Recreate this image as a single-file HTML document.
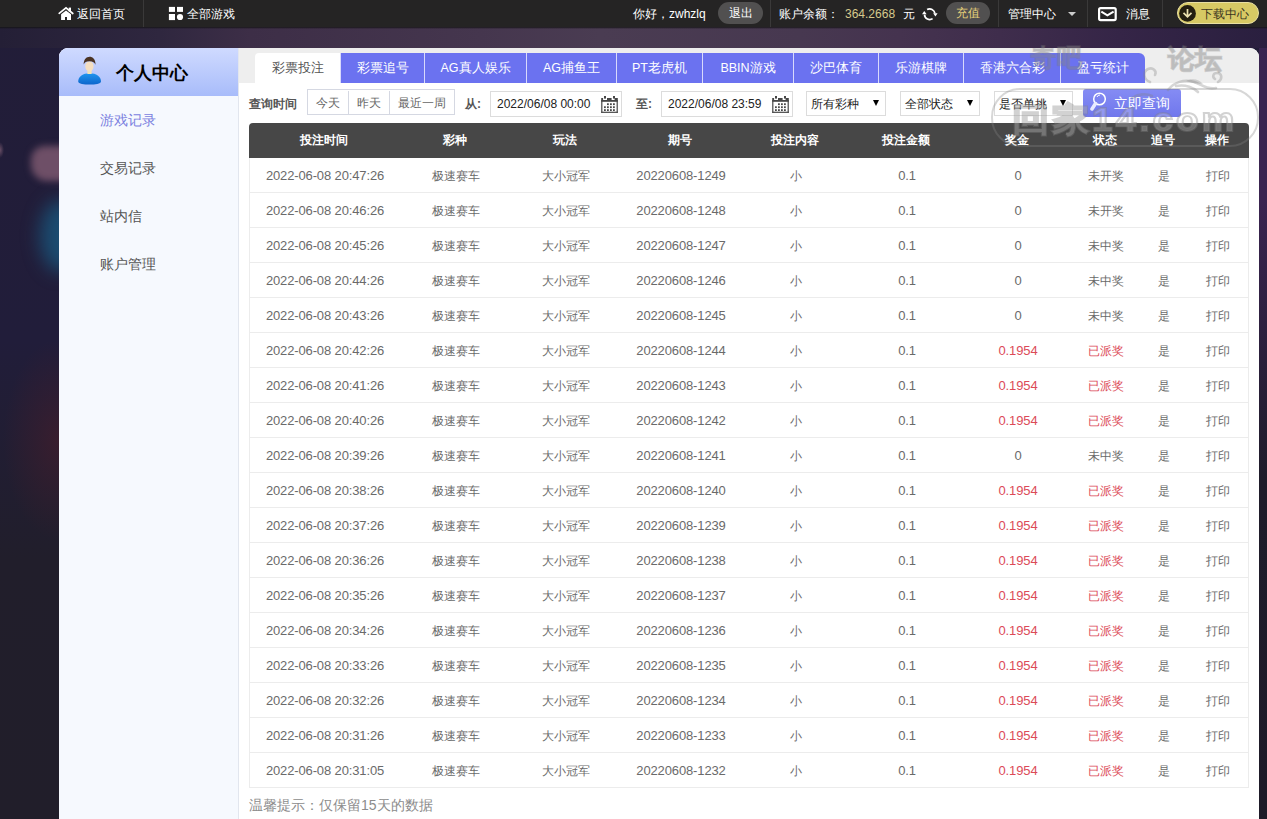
<!DOCTYPE html>
<html><head><meta charset="utf-8">
<style>
*{margin:0;padding:0;box-sizing:border-box}
html,body{width:1267px;height:819px;overflow:hidden}
body{position:relative;font-family:"Liberation Sans",sans-serif;font-size:13px;color:#555;
background:
 linear-gradient(rgba(18,18,18,0.85) 27px, rgba(18,18,18,0) 29px) 0 0 / 1267px 40px no-repeat,
 linear-gradient(90deg,#241f36 0px,#2f273f 160px,#3d2e47 250px,#45364e 480px,#4a3c52 600px,#473850 800px,#45334f 900px,#3f2d4c 1000px,#352547 1120px,#2a1f3f 1267px) 0 27px / 1267px 21px no-repeat,
 radial-gradient(ellipse 4px 8px at 0px 150px, rgba(150,110,130,0.6), rgba(150,110,130,0) 100%),
 radial-gradient(ellipse 55px 100px at 58px 440px, rgba(75,30,42,0.55), rgba(75,30,42,0) 100%),
 linear-gradient(180deg,#382450 0px,#3a2450 200px,#2a1f3a 360px,#1f1c2a 480px,#1e1b28 819px) 1259px 0 / 8px 819px no-repeat,
 linear-gradient(180deg,#221d38 0px,#211d3a 340px,#211e2b 560px,#211e2a 819px);
}
.abs{position:absolute}
#top{position:absolute;left:0;top:0;width:1267px;height:27px;background:#252424;color:#fff;font-size:12px}
#top .t{position:absolute;top:1px;line-height:27px;white-space:nowrap}
#top .dv{position:absolute;top:0;width:1px;height:27px;background:#3a3939}
.pill{position:absolute;top:2px;height:22px;border-radius:11px;background:#515050;line-height:23px;text-align:center}
#panel{position:absolute;left:59px;top:48px;width:1200px;height:771px;background:#fff;border-radius:9px 9px 0 0;overflow:hidden}
#side{position:absolute;left:0;top:0;width:180px;height:771px;background:#f6f9fe;border-right:1px solid #e2e6ee}
#sidehd{position:absolute;left:0;top:0;width:179px;height:48px;background:linear-gradient(#cfdaff,#a8bcfa)}
#sidehd .tt{position:absolute;left:57px;top:1px;line-height:48px;font-size:18px;font-weight:bold;color:#000}
.menu{position:absolute;left:41px;font-size:14px;color:#555;line-height:20px}
#tabbar{position:absolute;left:180px;top:0;width:1020px;height:35px;background:#eeeeee}
.tab{position:absolute;top:5px;height:30px;background:#6b72f0;color:#fff;text-align:center;line-height:31px;font-size:12.5px;border-left:1px solid #d8dafc}
.tab.act{background:#fff;color:#555;border-left:none;border-radius:4px 0 0 0}
.tab.last{border-radius:0 6px 0 0}
.lbl{position:absolute;font-size:12px;color:#555;font-weight:bold;line-height:20px}
.btng{position:absolute;left:248px;top:41px;width:148px;height:26px;border:1px solid #d5d8e2}
.btng span{position:absolute;top:1px;height:24px;line-height:24px;text-align:center;color:#666;font-size:12px}
.inp{position:absolute;top:43px;width:132px;height:26px;border:1px solid #dcdcdc;background:#fff;color:#222;font-size:12px;line-height:24px;padding-left:6px}
.inp .cal{position:absolute;right:3px;top:3px}
.sel{position:absolute;top:43px;width:80px;height:25px;border:1px solid #dcdcdc;background:#fff;color:#222;font-size:12px;line-height:25px;padding-left:4px}
.sel .ar{position:absolute;right:6px;top:8px;width:0;height:0;border-left:3.5px solid transparent;border-right:3.5px solid transparent;border-top:6px solid #000}
#search{position:absolute;left:1024px;top:41px;width:98px;height:28px;border-radius:3px;background:linear-gradient(#858cf4,#7077ec);color:#fff;font-size:14px;line-height:28px}
#tbl{position:absolute;left:190px;top:75px;width:1000px;height:665px}
#thd{position:absolute;left:0;top:0;width:1000px;height:35px;background:#474747;border-radius:4px 4px 0 0;color:#fff;font-weight:bold;font-size:12px}
.c{position:absolute;width:120px;text-align:center;top:0;line-height:35px;white-space:nowrap}
.row{position:absolute;left:0;width:1000px;height:35px;border:1px solid #ececec;border-top:none;color:#6a6a6a;font-size:13px}
.row .c{line-height:34px;top:1px;letter-spacing:-0.13px}
.row .c.z{font-size:12px;letter-spacing:0}
.red{color:#dc4a58;font-style:normal}
#tip{position:absolute;left:190px;top:747px;font-size:14px;color:#8c8c8c;line-height:20px}
.wm{position:absolute;font-weight:bold;color:rgba(150,150,150,0.26);-webkit-text-stroke:1.5px rgba(120,120,120,0.28);white-space:nowrap;line-height:1}
</style></head><body>
<div class="abs" style="left:31px;top:146px;width:40px;height:35px;border-radius:14px 8px 8px 16px;background:rgba(140,98,120,0.72);filter:blur(3.5px)"></div>
<div class="abs" style="left:40px;top:200px;width:42px;height:72px;border-radius:50%;background:rgba(24,96,135,0.7);filter:blur(9px)"></div>
<div id="top">
  <svg class="abs" style="left:55px;top:3px" width="20" height="20" viewBox="0 0 20 20"><path d="M4.2 10.3L11 4.9l6.8 5.6" fill="none" stroke="#fff" stroke-width="1.7" stroke-linecap="round" stroke-linejoin="miter"/><rect x="13.7" y="4.6" width="2.3" height="4" fill="#fff"/><path d="M6.1 17.1V11.2L11 7.6l5 3.6v5.9h-4V14h-2v3.1z" fill="#fff"/></svg>
  <span class="t" style="left:77px">返回首页</span>
  <div class="dv" style="left:143px"></div>
  <svg class="abs" style="left:165px;top:3px" width="20" height="20" viewBox="0 0 20 20"><rect x="3.9" y="3.9" width="6.1" height="5" fill="#fff"/><rect x="12" y="3.9" width="6" height="5" fill="#fff"/><rect x="3.9" y="11" width="6.1" height="6.1" fill="#fff"/><circle cx="15" cy="14" r="3.1" fill="#fff"/></svg>
  <span class="t" style="left:187px">全部游戏</span>
  <span class="t" style="left:633px">你好，zwhzlq</span>
  <div class="pill" style="left:718px;width:45px">退出</div>
  <div class="dv" style="left:770px"></div>
  <span class="t" style="left:779px">账户余额：</span>
  <span class="t" style="left:845px;color:#d6c98c">364.2668</span>
  <span class="t" style="left:903px">元</span>
  <svg class="abs" style="left:918px;top:3px" width="24" height="24" viewBox="0 0 24 24"><g fill="none" stroke="#fff" stroke-width="1.7"><path d="M9.1 6.6A5.2 5.2 0 0 1 16.9 10.4"/><path d="M14.6 15.6A5.2 5.2 0 0 1 6.5 11.6"/></g><g fill="#fff"><path d="M15.2 10.2h4.4l-2.2 3.2z"/><path d="M4 11.3h4.6L6.3 8z"/></g></svg>
  <div class="pill" style="left:946px;width:44px;color:#e6d27a">充值</div>
  <div class="dv" style="left:998px"></div>
  <span class="t" style="left:1008px">管理中心</span>
  <div class="abs" style="left:1068px;top:12px;width:0;height:0;border-left:4px solid transparent;border-right:4px solid transparent;border-top:4px solid #ccc"></div>
  <div class="dv" style="left:1087px"></div>
  <svg class="abs" style="left:1098px;top:7px" width="19" height="15" viewBox="0 0 19 15"><rect x="1.1" y="1.1" width="16.6" height="12" rx="1.5" fill="none" stroke="#fff" stroke-width="2.2"/><path d="M3.3 4.6l6.1 3.8 6.2-3.8" fill="none" stroke="#fff" stroke-width="2"/></svg>
  <span class="t" style="left:1126px">消息</span>
  <div class="dv" style="left:1162px"></div>
  <div class="abs" style="left:1177px;top:2px;width:82px;height:22px;border-radius:11px;background:#d7c964;border:1.5px solid #e9e0a2"></div>
  <svg class="abs" style="left:1174px;top:1px" width="26" height="26" viewBox="0 0 26 26"><circle cx="13.5" cy="12.4" r="8.4" fill="#241f10"/><path d="M13.5 8v7.6M9.5 11.9l4 3.9 4-3.9" fill="none" stroke="#ece2b0" stroke-width="1.7"/></svg>
  <span class="t" style="left:1201px;color:#3b3520">下载中心</span>
</div>

<div id="panel">
  <div id="side">
    <div id="sidehd">
      <svg class="abs" style="left:18px;top:8px" width="26" height="30" viewBox="0 0 26 30"><defs><linearGradient id="bd" x1="0" y1="0" x2="0" y2="1"><stop offset="0" stop-color="#1f95ee"/><stop offset="1" stop-color="#0d66cc"/></linearGradient></defs><path d="M1.2 25.5C1.2 20.5 6 17.3 12.6 17.3S24 20.5 24 25.5C24 28 18 28.6 12.6 28.6S1.2 28 1.2 25.5z" fill="url(#bd)"/><rect x="10.4" y="12" width="4.2" height="6" fill="#f3e2b4"/><ellipse cx="12.4" cy="10.4" rx="4.1" ry="5" fill="#f5dfc0"/><path d="M6.7 8.5C6.5 3.5 9.5 0.8 12.6 0.8S18.7 3.2 18.5 8.8C17.5 6.5 16 5.2 12.5 5.2S7.8 6.2 6.7 8.5z" fill="#4b3424"/></svg>
      <span class="tt">个人中心</span>
    </div>
    <div class="menu" style="top:62px;color:#7a7fe0">游戏记录</div>
    <div class="menu" style="top:110px">交易记录</div>
    <div class="menu" style="top:158px">站内信</div>
    <div class="menu" style="top:206px">账户管理</div>
  </div>
  <div id="tabbar"></div>
  <div class="tab act" style="left:196px;width:85px">彩票投注</div><div class="tab" style="left:281px;width:84px">彩票追号</div><div class="tab" style="left:365px;width:102px">AG真人娱乐</div><div class="tab" style="left:467px;width:90px">AG捕鱼王</div><div class="tab" style="left:557px;width:86px">PT老虎机</div><div class="tab" style="left:643px;width:91px">BBIN游戏</div><div class="tab" style="left:734px;width:85px">沙巴体育</div><div class="tab" style="left:819px;width:85px">乐游棋牌</div><div class="tab" style="left:904px;width:97px">香港六合彩</div><div class="tab last" style="left:1001px;width:85px">盈亏统计</div>
  <span class="lbl" style="left:190px;top:46px">查询时间</span>
  <div class="btng"><span style="left:0;width:41px;border-right:1px solid #d5d8e2">今天</span><span style="left:41px;width:41px;border-right:1px solid #d5d8e2">昨天</span><span style="left:82px;width:64px">最近一周</span></div>
  <span class="lbl" style="left:406px;top:46px">从:</span>
  <div class="inp" style="left:431px">2022/06/08 00:00<svg class="cal" width="17" height="18" viewBox="0 0 17 18"><g fill="#474747"><rect x="0.2" y="5" width="16.6" height="1.8"/><rect x="0.2" y="3" width="1.9" height="2.2"/><rect x="6" y="3" width="4.6" height="2.2"/><rect x="13.6" y="3" width="3.2" height="2.2"/><rect x="3" y="1" width="2" height="2.6"/><rect x="12" y="1" width="2" height="2.6"/><rect x="0.2" y="5" width="1.2" height="12.9"/><rect x="15.6" y="5" width="1.2" height="12.9"/><rect x="0.2" y="16.7" width="16.6" height="1.2"/><rect x="6" y="8.3" width="1.8" height="1.8"/><rect x="9" y="8.3" width="1.8" height="1.8"/><rect x="12" y="8.3" width="1.8" height="1.8"/><rect x="3" y="11.3" width="1.8" height="1.8"/><rect x="6" y="11.3" width="1.8" height="1.8"/><rect x="9" y="11.3" width="1.8" height="1.8"/><rect x="12" y="11.3" width="1.8" height="1.8"/><rect x="3" y="14.2" width="1.8" height="1.8"/><rect x="6" y="14.2" width="1.8" height="1.8"/><rect x="9" y="14.2" width="1.8" height="1.8"/><rect x="12" y="14.2" width="1.8" height="1.8"/></g></svg></div>
  <span class="lbl" style="left:577px;top:46px">至:</span>
  <div class="inp" style="left:602px">2022/06/08 23:59<svg class="cal" width="17" height="18" viewBox="0 0 17 18"><g fill="#474747"><rect x="0.2" y="5" width="16.6" height="1.8"/><rect x="0.2" y="3" width="1.9" height="2.2"/><rect x="6" y="3" width="4.6" height="2.2"/><rect x="13.6" y="3" width="3.2" height="2.2"/><rect x="3" y="1" width="2" height="2.6"/><rect x="12" y="1" width="2" height="2.6"/><rect x="0.2" y="5" width="1.2" height="12.9"/><rect x="15.6" y="5" width="1.2" height="12.9"/><rect x="0.2" y="16.7" width="16.6" height="1.2"/><rect x="6" y="8.3" width="1.8" height="1.8"/><rect x="9" y="8.3" width="1.8" height="1.8"/><rect x="12" y="8.3" width="1.8" height="1.8"/><rect x="3" y="11.3" width="1.8" height="1.8"/><rect x="6" y="11.3" width="1.8" height="1.8"/><rect x="9" y="11.3" width="1.8" height="1.8"/><rect x="12" y="11.3" width="1.8" height="1.8"/><rect x="3" y="14.2" width="1.8" height="1.8"/><rect x="6" y="14.2" width="1.8" height="1.8"/><rect x="9" y="14.2" width="1.8" height="1.8"/><rect x="12" y="14.2" width="1.8" height="1.8"/></g></svg></div>
  <div class="sel" style="left:747px">所有彩种<i class="ar"></i></div>
  <div class="sel" style="left:841px">全部状态<i class="ar"></i></div>
  <div class="sel" style="left:935px;width:79px">是否单挑<i class="ar"></i></div>
  <div id="search">
    <svg class="abs" style="left:7px;top:3px" width="16" height="20" viewBox="0 0 16 20"><circle cx="9.5" cy="7" r="5.8" fill="none" stroke="#fff" stroke-width="1.5"/><path d="M7 5a3 3 0 0 1 3-2" fill="none" stroke="#fff" stroke-width="1"/><path d="M5.5 11.5L2 17" stroke="#e8eaff" stroke-width="3.5" stroke-linecap="round"/></svg>
    <span class="abs" style="left:31px;top:0">立即查询</span>
  </div>
  <div id="tbl">
    <div id="thd"><span class="c" style="left:15.0px">投注时间</span><span class="c" style="left:145.5px">彩种</span><span class="c" style="left:255.7px">玩法</span><span class="c" style="left:371.0px">期号</span><span class="c" style="left:486.3px">投注内容</span><span class="c" style="left:597.0px">投注金额</span><span class="c" style="left:708.0px">奖金</span><span class="c" style="left:796.3px">状态</span><span class="c" style="left:853.8px">追号</span><span class="c" style="left:908.0px">操作</span></div>
    <div class="row" style="top:35px"><span class="c" style="left:15.0px">2022-06-08 20:47:26</span><span class="c z" style="left:145.5px">极速赛车</span><span class="c z" style="left:255.7px">大小冠军</span><span class="c" style="left:371.0px">20220608-1249</span><span class="c z" style="left:486.3px">小</span><span class="c" style="left:597.0px">0.1</span><span class="c" style="left:708.0px">0</span><span class="c z" style="left:796.3px">未开奖</span><span class="c z" style="left:853.8px">是</span><span class="c z" style="left:908.0px">打印</span></div><div class="row" style="top:70px"><span class="c" style="left:15.0px">2022-06-08 20:46:26</span><span class="c z" style="left:145.5px">极速赛车</span><span class="c z" style="left:255.7px">大小冠军</span><span class="c" style="left:371.0px">20220608-1248</span><span class="c z" style="left:486.3px">小</span><span class="c" style="left:597.0px">0.1</span><span class="c" style="left:708.0px">0</span><span class="c z" style="left:796.3px">未开奖</span><span class="c z" style="left:853.8px">是</span><span class="c z" style="left:908.0px">打印</span></div><div class="row" style="top:105px"><span class="c" style="left:15.0px">2022-06-08 20:45:26</span><span class="c z" style="left:145.5px">极速赛车</span><span class="c z" style="left:255.7px">大小冠军</span><span class="c" style="left:371.0px">20220608-1247</span><span class="c z" style="left:486.3px">小</span><span class="c" style="left:597.0px">0.1</span><span class="c" style="left:708.0px">0</span><span class="c z" style="left:796.3px">未中奖</span><span class="c z" style="left:853.8px">是</span><span class="c z" style="left:908.0px">打印</span></div><div class="row" style="top:140px"><span class="c" style="left:15.0px">2022-06-08 20:44:26</span><span class="c z" style="left:145.5px">极速赛车</span><span class="c z" style="left:255.7px">大小冠军</span><span class="c" style="left:371.0px">20220608-1246</span><span class="c z" style="left:486.3px">小</span><span class="c" style="left:597.0px">0.1</span><span class="c" style="left:708.0px">0</span><span class="c z" style="left:796.3px">未中奖</span><span class="c z" style="left:853.8px">是</span><span class="c z" style="left:908.0px">打印</span></div><div class="row" style="top:175px"><span class="c" style="left:15.0px">2022-06-08 20:43:26</span><span class="c z" style="left:145.5px">极速赛车</span><span class="c z" style="left:255.7px">大小冠军</span><span class="c" style="left:371.0px">20220608-1245</span><span class="c z" style="left:486.3px">小</span><span class="c" style="left:597.0px">0.1</span><span class="c" style="left:708.0px">0</span><span class="c z" style="left:796.3px">未中奖</span><span class="c z" style="left:853.8px">是</span><span class="c z" style="left:908.0px">打印</span></div><div class="row" style="top:210px"><span class="c" style="left:15.0px">2022-06-08 20:42:26</span><span class="c z" style="left:145.5px">极速赛车</span><span class="c z" style="left:255.7px">大小冠军</span><span class="c" style="left:371.0px">20220608-1244</span><span class="c z" style="left:486.3px">小</span><span class="c" style="left:597.0px">0.1</span><span class="c" style="left:708.0px"><i class="red">0.1954</i></span><span class="c z" style="left:796.3px"><i class="red">已派奖</i></span><span class="c z" style="left:853.8px">是</span><span class="c z" style="left:908.0px">打印</span></div><div class="row" style="top:245px"><span class="c" style="left:15.0px">2022-06-08 20:41:26</span><span class="c z" style="left:145.5px">极速赛车</span><span class="c z" style="left:255.7px">大小冠军</span><span class="c" style="left:371.0px">20220608-1243</span><span class="c z" style="left:486.3px">小</span><span class="c" style="left:597.0px">0.1</span><span class="c" style="left:708.0px"><i class="red">0.1954</i></span><span class="c z" style="left:796.3px"><i class="red">已派奖</i></span><span class="c z" style="left:853.8px">是</span><span class="c z" style="left:908.0px">打印</span></div><div class="row" style="top:280px"><span class="c" style="left:15.0px">2022-06-08 20:40:26</span><span class="c z" style="left:145.5px">极速赛车</span><span class="c z" style="left:255.7px">大小冠军</span><span class="c" style="left:371.0px">20220608-1242</span><span class="c z" style="left:486.3px">小</span><span class="c" style="left:597.0px">0.1</span><span class="c" style="left:708.0px"><i class="red">0.1954</i></span><span class="c z" style="left:796.3px"><i class="red">已派奖</i></span><span class="c z" style="left:853.8px">是</span><span class="c z" style="left:908.0px">打印</span></div><div class="row" style="top:315px"><span class="c" style="left:15.0px">2022-06-08 20:39:26</span><span class="c z" style="left:145.5px">极速赛车</span><span class="c z" style="left:255.7px">大小冠军</span><span class="c" style="left:371.0px">20220608-1241</span><span class="c z" style="left:486.3px">小</span><span class="c" style="left:597.0px">0.1</span><span class="c" style="left:708.0px">0</span><span class="c z" style="left:796.3px">未中奖</span><span class="c z" style="left:853.8px">是</span><span class="c z" style="left:908.0px">打印</span></div><div class="row" style="top:350px"><span class="c" style="left:15.0px">2022-06-08 20:38:26</span><span class="c z" style="left:145.5px">极速赛车</span><span class="c z" style="left:255.7px">大小冠军</span><span class="c" style="left:371.0px">20220608-1240</span><span class="c z" style="left:486.3px">小</span><span class="c" style="left:597.0px">0.1</span><span class="c" style="left:708.0px"><i class="red">0.1954</i></span><span class="c z" style="left:796.3px"><i class="red">已派奖</i></span><span class="c z" style="left:853.8px">是</span><span class="c z" style="left:908.0px">打印</span></div><div class="row" style="top:385px"><span class="c" style="left:15.0px">2022-06-08 20:37:26</span><span class="c z" style="left:145.5px">极速赛车</span><span class="c z" style="left:255.7px">大小冠军</span><span class="c" style="left:371.0px">20220608-1239</span><span class="c z" style="left:486.3px">小</span><span class="c" style="left:597.0px">0.1</span><span class="c" style="left:708.0px"><i class="red">0.1954</i></span><span class="c z" style="left:796.3px"><i class="red">已派奖</i></span><span class="c z" style="left:853.8px">是</span><span class="c z" style="left:908.0px">打印</span></div><div class="row" style="top:420px"><span class="c" style="left:15.0px">2022-06-08 20:36:26</span><span class="c z" style="left:145.5px">极速赛车</span><span class="c z" style="left:255.7px">大小冠军</span><span class="c" style="left:371.0px">20220608-1238</span><span class="c z" style="left:486.3px">小</span><span class="c" style="left:597.0px">0.1</span><span class="c" style="left:708.0px"><i class="red">0.1954</i></span><span class="c z" style="left:796.3px"><i class="red">已派奖</i></span><span class="c z" style="left:853.8px">是</span><span class="c z" style="left:908.0px">打印</span></div><div class="row" style="top:455px"><span class="c" style="left:15.0px">2022-06-08 20:35:26</span><span class="c z" style="left:145.5px">极速赛车</span><span class="c z" style="left:255.7px">大小冠军</span><span class="c" style="left:371.0px">20220608-1237</span><span class="c z" style="left:486.3px">小</span><span class="c" style="left:597.0px">0.1</span><span class="c" style="left:708.0px"><i class="red">0.1954</i></span><span class="c z" style="left:796.3px"><i class="red">已派奖</i></span><span class="c z" style="left:853.8px">是</span><span class="c z" style="left:908.0px">打印</span></div><div class="row" style="top:490px"><span class="c" style="left:15.0px">2022-06-08 20:34:26</span><span class="c z" style="left:145.5px">极速赛车</span><span class="c z" style="left:255.7px">大小冠军</span><span class="c" style="left:371.0px">20220608-1236</span><span class="c z" style="left:486.3px">小</span><span class="c" style="left:597.0px">0.1</span><span class="c" style="left:708.0px"><i class="red">0.1954</i></span><span class="c z" style="left:796.3px"><i class="red">已派奖</i></span><span class="c z" style="left:853.8px">是</span><span class="c z" style="left:908.0px">打印</span></div><div class="row" style="top:525px"><span class="c" style="left:15.0px">2022-06-08 20:33:26</span><span class="c z" style="left:145.5px">极速赛车</span><span class="c z" style="left:255.7px">大小冠军</span><span class="c" style="left:371.0px">20220608-1235</span><span class="c z" style="left:486.3px">小</span><span class="c" style="left:597.0px">0.1</span><span class="c" style="left:708.0px"><i class="red">0.1954</i></span><span class="c z" style="left:796.3px"><i class="red">已派奖</i></span><span class="c z" style="left:853.8px">是</span><span class="c z" style="left:908.0px">打印</span></div><div class="row" style="top:560px"><span class="c" style="left:15.0px">2022-06-08 20:32:26</span><span class="c z" style="left:145.5px">极速赛车</span><span class="c z" style="left:255.7px">大小冠军</span><span class="c" style="left:371.0px">20220608-1234</span><span class="c z" style="left:486.3px">小</span><span class="c" style="left:597.0px">0.1</span><span class="c" style="left:708.0px"><i class="red">0.1954</i></span><span class="c z" style="left:796.3px"><i class="red">已派奖</i></span><span class="c z" style="left:853.8px">是</span><span class="c z" style="left:908.0px">打印</span></div><div class="row" style="top:595px"><span class="c" style="left:15.0px">2022-06-08 20:31:26</span><span class="c z" style="left:145.5px">极速赛车</span><span class="c z" style="left:255.7px">大小冠军</span><span class="c" style="left:371.0px">20220608-1233</span><span class="c z" style="left:486.3px">小</span><span class="c" style="left:597.0px">0.1</span><span class="c" style="left:708.0px"><i class="red">0.1954</i></span><span class="c z" style="left:796.3px"><i class="red">已派奖</i></span><span class="c z" style="left:853.8px">是</span><span class="c z" style="left:908.0px">打印</span></div><div class="row" style="top:630px"><span class="c" style="left:15.0px">2022-06-08 20:31:05</span><span class="c z" style="left:145.5px">极速赛车</span><span class="c z" style="left:255.7px">大小冠军</span><span class="c" style="left:371.0px">20220608-1232</span><span class="c z" style="left:486.3px">小</span><span class="c" style="left:597.0px">0.1</span><span class="c" style="left:708.0px"><i class="red">0.1954</i></span><span class="c z" style="left:796.3px"><i class="red">已派奖</i></span><span class="c z" style="left:853.8px">是</span><span class="c z" style="left:908.0px">打印</span></div>
  </div>
  <div id="tip">温馨提示：仅保留15天的数据</div>
</div>

<div class="wm" style="left:1031px;top:45px;font-size:25px;letter-spacing:1px">奇吧</div>
<div class="wm" style="left:1168px;top:46px;font-size:27px">论坛</div>
<div class="abs" style="left:991px;top:88px;width:268px;height:59px;border:2px solid rgba(130,130,130,0.32);border-radius:29px"></div>
<svg class="abs" style="left:1120px;top:60px" width="130" height="40" viewBox="0 0 130 40"><g fill="none" stroke="rgba(130,130,130,0.33)" stroke-width="2.6" stroke-linecap="round"><path d="M30 22c-6-2-8-10-2-13 5-2 9 2 7 6"/><path d="M48 30c6-8 16-11 26-8 8 3 14 8 22 6"/><path d="M56 26c10-2 18 2 22 6"/><path d="M98 22c5-3 4-9-1-9-4 0-5 4-2 6"/><path d="M12 38c6-4 14-5 20-2"/></g><path d="M66 21c6-3 13-2 17 3-6 0-11-1-17-3z" fill="rgba(130,130,130,0.3)"/></svg>
<div class="wm" style="left:1012px;top:104px;font-size:37px;letter-spacing:3px;transform:scaleY(0.88);transform-origin:0 0;color:rgba(255,255,255,0.22);-webkit-text-stroke:2.2px rgba(130,130,130,0.36)">回家14.com</div>
</body></html>
